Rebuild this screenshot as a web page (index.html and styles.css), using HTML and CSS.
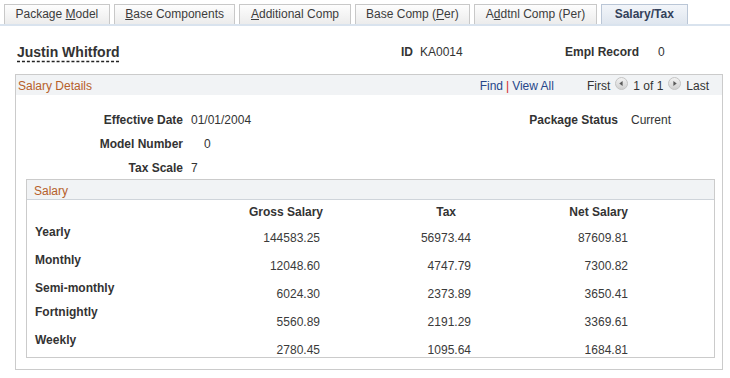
FILE: index.html
```html
<!DOCTYPE html>
<html lang="en">
<head>
    <meta charset="UTF-8">
    <title>Salary/Tax</title>
    <link rel="stylesheet" href="styles.css">
</head>
<body>
    <ul class="tabs">
        <li class="tab">Package <u>M</u>odel</li>
        <li class="tab"><u>B</u>ase Components</li>
        <li class="tab"><u>A</u>dditional Comp</li>
        <li class="tab">Base Comp (<u>P</u>er)</li>
        <li class="tab">A<u>d</u>dtnl Comp (Per)</li>
        <li class="tab cur">Salary/Tax</li>
    </ul>

    <div class="emp">
        <span class="emp-name">Justin Whitford</span>
        <span class="emp-id"><b>ID</b><span class="val">KA0014</span></span>
        <span class="emp-rec"><b>Empl Record</b><span class="val">0</span></span>
    </div>

    <div class="box">
        <div class="box-head">
            <span class="title">Salary Details</span>
            <span class="nav">
                <a>Find</a><i class="pipe">|</i><a>View All</a>
                <span class="pager">
                    First
                    <svg class="arrow" width="13" height="13" viewBox="0 0 13 13"><defs><linearGradient id="g1" x1="0" y1="0" x2="0" y2="1"><stop offset="0" stop-color="#f4f4f4"/><stop offset="1" stop-color="#cfcfcf"/></linearGradient></defs><circle cx="6.5" cy="6.5" r="6" fill="url(#g1)" stroke="#c4c4c4"/><path d="M4.3 6.5 L7.6 3.9 L7.6 9.1 Z" fill="#5a5a5a"/></svg>
                    1 of 1
                    <svg class="arrow" width="13" height="13" viewBox="0 0 13 13"><defs><linearGradient id="g2" x1="0" y1="0" x2="0" y2="1"><stop offset="0" stop-color="#f4f4f4"/><stop offset="1" stop-color="#cfcfcf"/></linearGradient></defs><circle cx="6.5" cy="6.5" r="6" fill="url(#g2)" stroke="#c4c4c4"/><path d="M8.7 6.5 L5.4 3.9 L5.4 9.1 Z" fill="#5a5a5a"/></svg>
                    Last
                </span>
            </span>
        </div>

        <div class="fields">
            <b class="lbl">Effective Date</b><span class="fv">01/01/2004</span>
            <b class="lbl">Package Status</b><span class="fv2">Current</span>
            <b class="lbl">Model Number</b><span class="fv num">0</span><span></span><span></span>
            <b class="lbl">Tax Scale</b><span class="fv">7</span><span></span><span></span>
        </div>

        <div class="box inner">
            <div class="box-head">
                <span class="title">Salary</span>
            </div>
            <div class="grid">
                <span></span>
                <b class="th gross">Gross Salary</b>
                <b class="th tax">Tax</b>
                <b class="th net">Net Salary</b>

                <b class="rl">Yearly</b><span class="v">144583.25</span><span class="v">56973.44</span><span class="v">87609.81</span>
                <b class="rl">Monthly</b><span class="v">12048.60</span><span class="v">4747.79</span><span class="v">7300.82</span>
                <b class="rl">Semi-monthly</b><span class="v">6024.30</span><span class="v">2373.89</span><span class="v">3650.41</span>
                <b class="rl up">Fortnightly</b><span class="v">5560.89</span><span class="v">2191.29</span><span class="v">3369.61</span>
                <b class="rl up">Weekly</b><span class="v">2780.45</span><span class="v">1095.64</span><span class="v">1684.81</span>
            </div>
        </div>
    </div>
</body>
</html>
```

FILE: styles.css
```css
*{
    margin: 0;
    padding: 0;
    list-style: none;
    box-sizing: border-box;
}
body{
    font-family: "Liberation Sans", Arial, sans-serif;
    font-size: 12px;
    line-height: 14px;
    color: #333;
    background: #fff;
}
b{
    font-weight: bold;
}
.tabs{
    display: flex;
    gap: 4px;
    padding: 4px 0 0 4px;
    border-bottom: 2px solid #d9e3ee;
}
.tabs .tab{
    height: 20px;
    line-height: 18px;
    padding: 0 10.5px;
    border: 1px solid #c8c8c8;
    border-bottom: none;
    background: linear-gradient(#fdfdfd, #ececec);
    color: #3c3c3c;
    white-space: nowrap;
}
.tabs .tab u{
    text-decoration-thickness: 1px;
}
.tabs .tab.cur{
    font-weight: bold;
    padding: 0 13px;
    border-color: #bac6d6;
    background: linear-gradient(#f2f5f9, #dfe6ef);
    color: #33415a;
}
.emp{
    display: flex;
    align-items: center;
    padding: 4px 0 0 17px;
    height: 48px;
}
.emp-name{
    width: 384px;
    font-size: 14px;
    font-weight: bold;
    line-height: 16px;
    color: #333;
    text-decoration: underline dashed #222;
    text-underline-offset: 4px;
}
.emp-id{
    width: 164px;
}
.emp-id .val{
    margin-left: 7px;
}
.emp-rec .val{
    margin-left: 19px;
}
.box{
    border: 1px solid #cbcbcb;
    margin: 0 7px 0 15px;
    height: 296px;
}
.box-head{
    display: flex;
    justify-content: space-between;
    align-items: center;
    height: 20px;
    padding: 2px 13px 0 2px;
    background: #f1f3f5;
}
.box-head .title{
    color: #b6602a;
}
.nav{
    display: flex;
    align-items: center;
    color: #333;
}
.nav a{
    color: #27468a;
}
.nav .pipe{
    font-style: normal;
    color: #d42a2a;
    margin: 0 3px;
}
.pager{
    display: flex;
    align-items: center;
    gap: 5px;
    margin-left: 33px;
}
.pager .arrow{
    display: block;
    margin-top: -5px;
}
.fields{
    display: grid;
    grid-template-columns: 167px 1fr auto 104px;
    row-gap: 10px;
    padding-top: 18px;
}
.fields .lbl{
    text-align: right;
}
.fields .fv{
    padding-left: 8px;
}
.fields .fv.num{
    padding-left: 21px;
}
.fields .fv2{
    padding-left: 13px;
}
.box.inner{
    margin: 4px 7px 0 10px;
    height: 179px;
}
.box.inner .box-head{
    padding-left: 7px;
    border-bottom: 1px solid #cfd4da;
}
.grid{
    display: grid;
    grid-template-columns: 172px 113px 151px 157px;
    grid-template-rows: 20px repeat(4, 28px) 20px;
    padding: 5px 0 0 8px;
}
.grid .th{
    text-align: right;
}
.grid .th.gross{
    margin-right: -3px;
}
.grid .th.tax{
    padding-right: 15px;
}
.grid .v{
    text-align: right;
    padding-top: 6px;
    color: #3a3a3a;
}
.grid .rl.up{
    margin-top: -4px;
}
```
